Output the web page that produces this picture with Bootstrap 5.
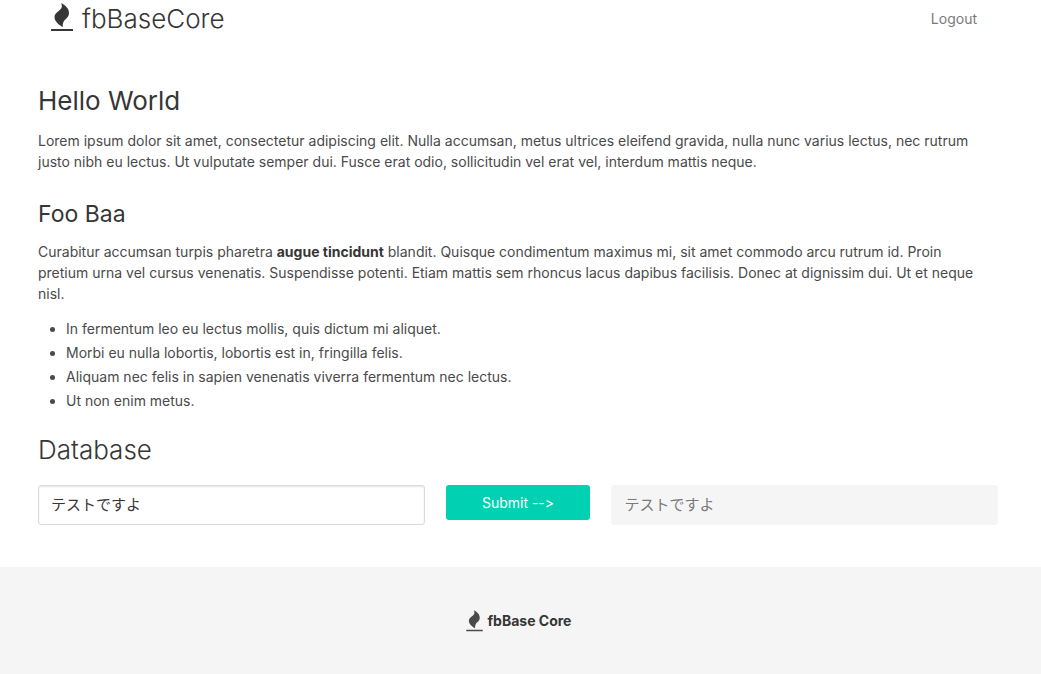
<!DOCTYPE html>
<html lang="en">
<head>
<meta charset="utf-8">
<meta name="viewport" content="width=device-width, initial-scale=1">
<title>fbBaseCore</title>
<link href="https://cdn.jsdelivr.net/npm/bootstrap@5.3.0/dist/css/bootstrap.min.css" rel="stylesheet">
<style>
body { font-family: Inter, "Noto Sans CJK JP", sans-serif; font-size: 14px; line-height: 21px; color: #4a4a4a; background: #fff; padding-right: 5px; }
.page { max-width: 960px; margin: 0 auto; }
.topbar { padding: 0 21px 0 12px; }
.brand { font-size: 26px; line-height: 38px; font-weight: 300; color: #363636; }
.brand svg { width: 24px; height: 32px; margin-bottom: 6px; }
.logout { color: #7a7a7a; line-height: 38px; }
h1, h2, .h-light { color: #363636; margin: 0; font-weight: 400; }
h1, .h-light { font-size: 26px; line-height: 32px; }
h2 { font-size: 23px; line-height: 28px; }
.h-light { font-weight: 300; }
.intro { padding-top: 47px; }
.intro p { margin: 13px 0 0; padding-right: 7px; }
.intro p + h2 { margin-top: 28px; }
.points { padding-left: 28px; margin: 14px 0 23px; }
.points li { margin-bottom: 3px; }
strong { color: #363636; }
.fields { gap: 21px; margin-top: 19px; }
.grow { flex: 8 1 0; }
.send { flex: 3 1 0; }
.form-control { height: 40px; font-size: 15px; padding: 4px 12px 8px; border-color: #dbdbdb; border-radius: 3px; color: #363636; box-shadow: inset 0 1px 2px rgba(10,10,10,.1); }
.form-control:disabled { background: #f5f5f5; border-color: #f5f5f5; color: #7a7a7a; box-shadow: none; }
.btn-go { width: 100%; height: 35px; padding: 0; font-size: 14px; line-height: 35px; font-variant-ligatures: none; font-feature-settings: "calt" 0; color: #fff; background: #00d1b2; border: 0; border-radius: 3px; }
.btn-go:hover { background: #00c4a7; color: #fff; }
.foot { background: #f5f5f5; margin: 42px -5px 0 0; padding: 41px 5px 42px 0; min-height: 107px; }
.foot svg { width: 19px; height: 24px; }
</style>
</head>
<body>
<svg class="d-none" aria-hidden="true"><symbol id="flame" viewBox="0 0 24 32"><path d="M11 3C15 5 19 8 19 13C19 18 14.500 19 13.500 22C12.800 24 12.500 25 13 27C9 25 4.500 21.500 4.500 17C4.500 12 11 11 11.800 7C12 5 11.600 4 11 3Z" fill="currentColor"/><path d="M1 30H23" stroke="currentColor" stroke-width="2"/></symbol></svg>
<header class="page topbar d-flex justify-content-between align-items-center">
  <a class="brand d-flex align-items-center gap-2 text-decoration-none" href="#"><svg aria-hidden="true"><use href="#flame"/></svg>fbBaseCore</a>
  <a class="logout text-decoration-none" href="#">Logout</a>
</header>
<main class="page">
  <section class="intro">
    <h1>Hello World</h1>
    <p>Lorem ipsum dolor sit amet, consectetur adipiscing elit. Nulla accumsan, metus ultrices eleifend gravida, nulla nunc varius lectus, nec rutrum justo nibh eu lectus. Ut vulputate semper dui. Fusce erat odio, sollicitudin vel erat vel, interdum mattis neque.</p>
    <h2>Foo Baa</h2>
    <p>Curabitur accumsan turpis pharetra <strong>augue tincidunt</strong> blandit. Quisque condimentum maximus mi, sit amet commodo arcu rutrum id. Proin pretium urna vel cursus venenatis. Suspendisse potenti. Etiam mattis sem rhoncus lacus dapibus facilisis. Donec at dignissim dui. Ut et neque nisl.</p>
    <ul class="points">
      <li>In fermentum leo eu lectus mollis, quis dictum mi aliquet.</li>
      <li>Morbi eu nulla lobortis, lobortis est in, fringilla felis.</li>
      <li>Aliquam nec felis in sapien venenatis viverra fermentum nec lectus.</li>
      <li>Ut non enim metus.</li>
    </ul>
  </section>
  <section>
    <h2 class="h-light" id="db">Database</h2>
    <form class="fields d-flex" aria-labelledby="db">
      <div class="grow"><input class="form-control" type="text" aria-label="Value" value="テストですよ"></div>
      <div class="send"><button class="btn btn-go" type="button">Submit --&gt;</button></div>
      <div class="grow"><input class="form-control" type="text" aria-label="Stored value" value="テストですよ" disabled></div>
    </form>
  </section>
</main>
<footer class="foot d-flex justify-content-center align-items-start">
  <div class="d-flex align-items-center gap-1"><svg aria-hidden="true"><use href="#flame"/></svg><strong>fbBase Core</strong></div>
</footer>
<script src="https://cdn.jsdelivr.net/npm/bootstrap@5.3.0/dist/js/bootstrap.bundle.min.js"></script>
</body>
</html>
